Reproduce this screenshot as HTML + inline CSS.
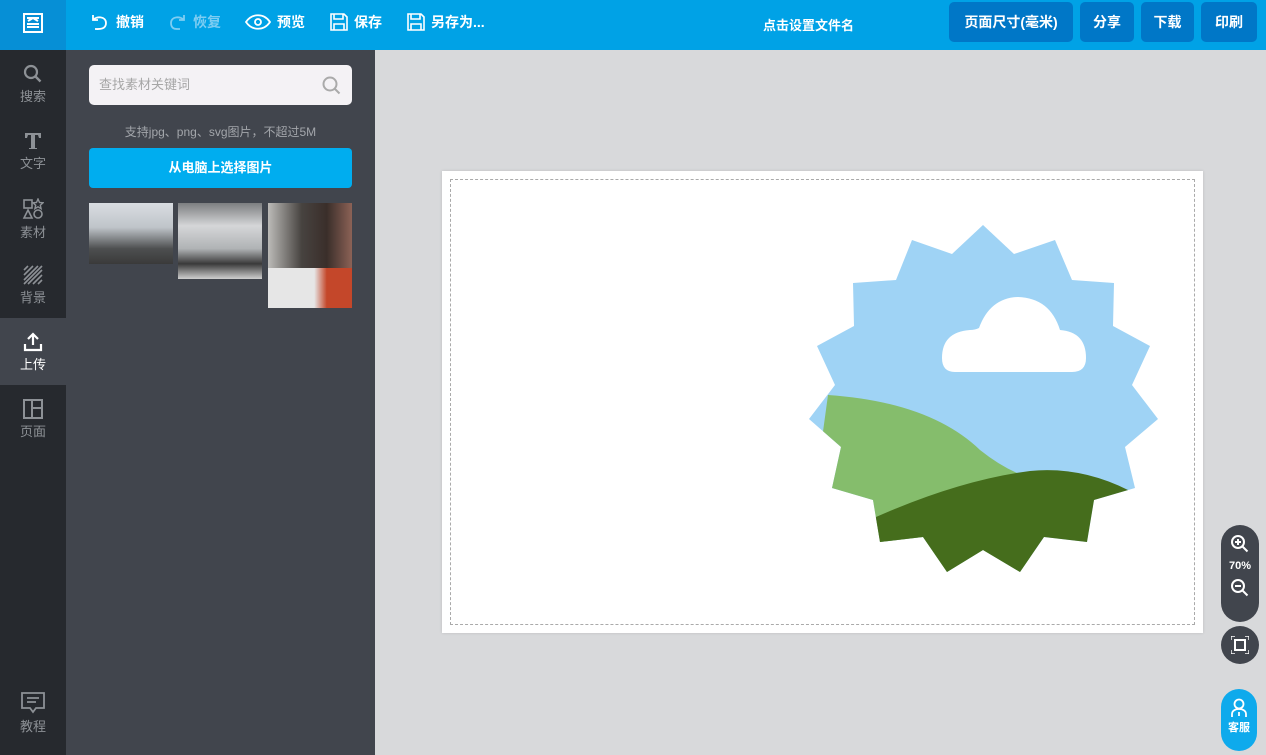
<!DOCTYPE html>
<html><head><meta charset="utf-8"><style>
*{margin:0;padding:0;box-sizing:border-box}
body{width:1266px;height:755px;overflow:hidden;background:#d8d9db;font-family:"Liberation Sans","Noto Sans CJK SC",sans-serif;position:relative}
.top{position:absolute;left:0;top:0;width:1266px;height:50px;background:#00a2e6}
.logo{position:absolute;left:0;top:0;width:66px;height:50px;background:#068fd6}
.tb{position:absolute;top:12px;color:#fff;font-size:14px;font-weight:bold;display:flex;align-items:center;gap:6px}
.btn{position:absolute;top:2px;height:40px;background:#0077c7;border-radius:5px;color:#fff;font-size:14px;font-weight:bold;display:flex;align-items:center;justify-content:center}
.side{position:absolute;left:0;top:50px;width:66px;height:705px;background:#26292e}
.si{position:absolute;left:0;width:66px;height:67px;color:#8d9196;font-size:13px;text-align:center}
.si svg{display:block;margin:14px auto 2px}
.panel{position:absolute;left:66px;top:50px;width:309px;height:705px;background:#41454d}
</style></head><body>
<div class="top">
<div class="logo"><svg style="position:absolute;left:22px;top:12px" width="22" height="22" viewBox="0 0 22 22"><rect x="1" y="1" width="20" height="20" fill="#fff"/><rect x="3" y="3" width="16" height="16" fill="#068fd6"/><path d="M5 6h12M6 9l5-3 5 3M5 12h12M5 15h12" stroke="#fff" stroke-width="2" fill="none"/></svg></div>
<div class="tb" style="left:90px"><svg width="20" height="18" viewBox="0 0 20 18"><path d="M3 2v5h5M3 7c3-4 13-4 13 3s-8 6-11 6" stroke="#fff" stroke-width="1.8" fill="none"/></svg>撤销</div>
<div class="tb" style="left:167px;color:#7ecdf2"><svg width="20" height="18" viewBox="0 0 20 18"><path d="M17 2v5h-5M17 7c-3-4-13-4-13 3s6 6 9 6" stroke="#7ecdf2" stroke-width="1.8" fill="none"/></svg>恢复</div>
<div class="tb" style="left:245px"><svg width="26" height="18" viewBox="0 0 26 18"><path d="M1 9c6-9 18-9 24 0c-6 9-18 9-24 0z" stroke="#fff" stroke-width="1.8" fill="none"/><circle cx="13" cy="9" r="3" stroke="#fff" stroke-width="1.8" fill="none"/></svg>预览</div>
<div class="tb" style="left:330px"><svg width="18" height="18" viewBox="0 0 18 18"><path d="M1 1h13l3 3v13H1z M4 1v5h9V1 M4 17v-6h10v6" stroke="#fff" stroke-width="1.6" fill="none"/></svg>保存</div>
<div class="tb" style="left:407px"><svg width="18" height="18" viewBox="0 0 18 18"><path d="M1 1h13l3 3v13H1z M4 1v5h9V1 M4 17v-6h10v6" stroke="#fff" stroke-width="1.6" fill="none"/></svg>另存为...</div>
<div class="tb" style="left:763px;top:15px;font-size:13px">点击设置文件名</div>
<div class="btn" style="left:949px;width:124px">页面尺寸(毫米)</div>
<div class="btn" style="left:1080px;width:54px">分享</div>
<div class="btn" style="left:1141px;width:53px">下载</div>
<div class="btn" style="left:1201px;width:56px">印刷</div>
</div>
<div class="side">
<div class="si" style="top:0"><svg width="20" height="20" viewBox="0 0 20 20"><circle cx="8" cy="8" r="6" stroke="#8d9196" stroke-width="2.2" fill="none"/><path d="M12.5 12.5l5 5" stroke="#8d9196" stroke-width="2.4"/></svg>搜索</div>
<div class="si" style="top:67px"><svg width="20" height="20" viewBox="0 0 20 20"><path d="M2 2h16v5h-2l-1-3h-3v13h2v1H6v-1h2V4H5L4 7H2z" fill="#8d9196"/></svg>文字</div>
<div class="si" style="top:134px"><svg width="22" height="22" viewBox="0 0 22 22"><rect x="2" y="2" width="8" height="8" stroke="#8d9196" stroke-width="1.6" fill="none"/><path d="M16 1l1.5 3.5 3.5.3-2.7 2.4.8 3.5-3.1-1.9-3.1 1.9.8-3.5-2.7-2.4 3.5-.3z" stroke="#8d9196" stroke-width="1.4" fill="none"/><path d="M6 12l4 8H2z" stroke="#8d9196" stroke-width="1.6" fill="none"/><circle cx="16" cy="16" r="4" stroke="#8d9196" stroke-width="1.6" fill="none"/></svg>素材</div>
<div class="si" style="top:201px"><svg width="20" height="20" viewBox="0 0 20 20"><path d="M1 5l4-4M1 10l9-9M1 15l14-14M1 19l18-18M5 19l14-14M10 19l9-9M15 19l4-4" stroke="#8d9196" stroke-width="1.6"/></svg>背景</div>
<div class="si" style="top:268px;background:#41454d;color:#fff"><svg width="20" height="20" viewBox="0 0 20 20"><path d="M10 2v11M5 7l5-5 5 5M2 12v6h16v-6" stroke="#fff" stroke-width="2.2" fill="none"/></svg>上传</div>
<div class="si" style="top:335px"><svg width="20" height="20" viewBox="0 0 20 20"><rect x="1" y="1" width="18" height="18" stroke="#8d9196" stroke-width="2" fill="none"/><path d="M9 1v18M9 9h10" stroke="#8d9196" stroke-width="2"/></svg>页面</div>
<div class="si" style="top:628px"><svg width="24" height="22" viewBox="0 0 24 22"><path d="M1 1h22v15H15l-3 4-3-4H1z" stroke="#8d9196" stroke-width="1.8" fill="none"/><path d="M6 6h12M6 10h9" stroke="#8d9196" stroke-width="1.8"/></svg>教程</div>
</div>
<div class="panel">
<div style="position:absolute;left:23px;top:15px;width:263px;height:40px;background:#f4f2f5;border-radius:5px;color:#a6a6a6;font-size:13px;line-height:40px;padding-left:10px">查找素材关键词<svg style="position:absolute;right:11px;top:11px" width="19" height="19" viewBox="0 0 19 19"><circle cx="8" cy="8" r="6.5" stroke="#aaa" stroke-width="2" fill="none"/><path d="M12.5 12.5l5 5" stroke="#aaa" stroke-width="2"/></svg></div>
<div style="position:absolute;left:0;top:73px;width:309px;text-align:center;color:#a3a6ab;font-size:12px">支持jpg、png、svg图片，不超过5M</div>
<div style="position:absolute;left:23px;top:98px;width:263px;height:40px;background:#00adef;border-radius:4px;color:#fff;font-size:13px;font-weight:bold;text-align:center;line-height:40px">从电脑上选择图片</div>
<div style="position:absolute;left:23px;top:153px;width:84px;height:61px;background:linear-gradient(180deg,#d9dde2 0%,#bfc4c9 40%,#4d4f50 75%,#3a3a3a 100%)"></div>
<div style="position:absolute;left:112px;top:153px;width:84px;height:76px;background:linear-gradient(180deg,#7c7e80 0%,#d5d6d8 30%,#b0b3b5 60%,#3a3a3a 80%,#cfcfcf 100%)"></div>
<div style="position:absolute;left:202px;top:153px;width:84px;height:105px;background:linear-gradient(90deg,#bcbbb8 0%,#474340 40%,#3a2e2a 70%,#8c6256 100%)"><div style="position:absolute;left:0;bottom:0;width:84px;height:40px;background:linear-gradient(90deg,#e6e6e6 55%,#c4472a 70%)"></div></div>
</div>
<div style="position:absolute;left:442px;top:171px;width:761px;height:462px;background:#fff;box-shadow:0 0 3px rgba(0,0,0,.12)"><div style="position:absolute;left:8px;top:8px;right:8px;bottom:8px;border:1px dashed #aaa"></div></div>
<svg style="position:absolute;left:0;top:0" width="1266" height="755">
<defs><clipPath id="c"><polygon points="983,225 1014,254 1055,240 1072,280 1114,283 1113,326 1150,346 1132,385 1158,419 1125,447 1135,488 1094,500 1087,542 1044,537 1020,572 983,550 947,572 923,537 880,542 873,500 832,488 841,447 809,419 835,385 817,346 854,326 853,283 896,280 912,240 952,254"/></clipPath></defs>
<g clip-path="url(#c)">
<rect x="800" y="220" width="370" height="360" fill="#9fd3f5"/>
<path d="M828,395 Q930,402 980,450 Q1005,470 1030,478 L1030,600 L800,600 Z" fill="#85bd6c"/>
<path d="M876,517 Q960,480 1030,471 Q1080,466 1128,490 L1170,600 L860,600 Z" fill="#456d1c"/>
</g>
<path d="M955,372 Q942,372 942,358 Q942,332 970,330 Q975,330 979,328 Q990,298 1018,297 Q1050,298 1060,330 Q1086,332 1086,358 Q1086,372 1072,372 Z" fill="#fff"/>
</svg>
<div style="position:absolute;left:1221px;top:525px;width:38px;height:97px;background:#41454d;border-radius:19px;color:#fff;font-size:11px;font-weight:bold;text-align:center">
<svg style="display:block;margin:9px auto 0" width="20" height="20" viewBox="0 0 20 20"><circle cx="8" cy="8" r="6" stroke="#fff" stroke-width="2" fill="none"/><path d="M12.5 12.5l5 5M5 8h6M8 5v6" stroke="#fff" stroke-width="2"/></svg>
<div style="margin-top:6px">70%</div>
<svg style="display:block;margin:6px auto 0" width="20" height="20" viewBox="0 0 20 20"><circle cx="8" cy="8" r="6" stroke="#fff" stroke-width="2" fill="none"/><path d="M12.5 12.5l5 5M5 8h6" stroke="#fff" stroke-width="2"/></svg>
</div>
<div style="position:absolute;left:1221px;top:626px;width:38px;height:38px;background:#41454d;border-radius:50%"><svg style="position:absolute;left:10px;top:10px" width="18" height="18" viewBox="0 0 18 18"><rect x="4" y="4" width="10" height="10" stroke="#fff" stroke-width="2" fill="none"/><path d="M0 4V0h4M14 0h4v4M18 14v4h-4M4 18H0v-4" stroke="#fff" stroke-width="1.4" fill="none"/></svg></div>
<div style="position:absolute;left:1221px;top:689px;width:36px;height:62px;background:#0eaaec;border-radius:18px;color:#fff;font-size:11px;font-weight:bold;text-align:center">
<svg style="display:block;margin:9px auto 1px" width="18" height="20" viewBox="0 0 18 20"><circle cx="9" cy="6" r="4.5" stroke="#fff" stroke-width="1.8" fill="none"/><path d="M2 19v-3c0-3 3-5 7-5s7 2 7 5v3M9 14v4" stroke="#fff" stroke-width="1.8" fill="none"/></svg>客服</div>
</body></html>
